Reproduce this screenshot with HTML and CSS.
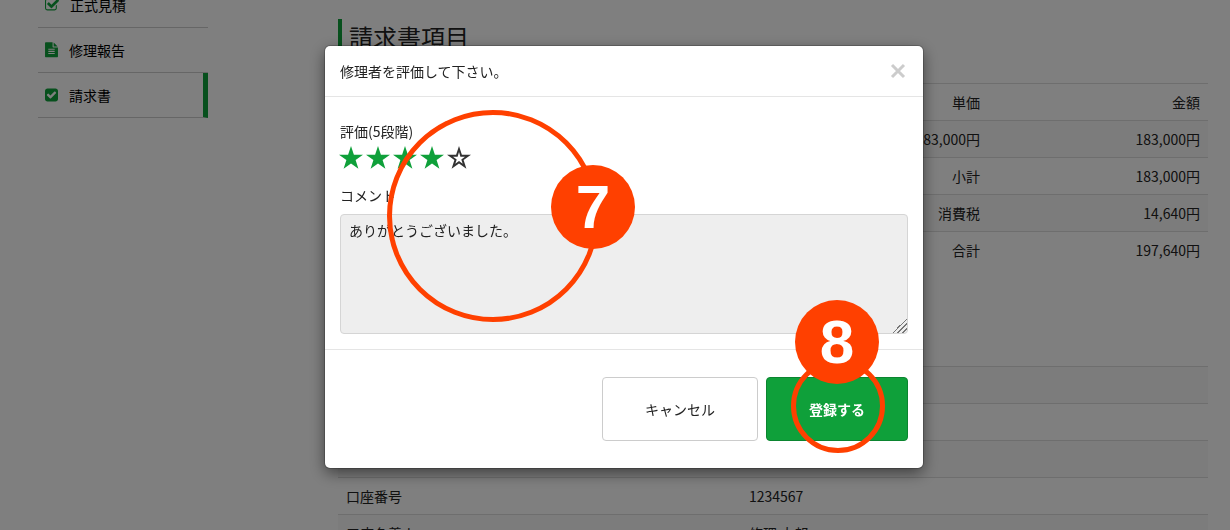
FILE: index.html
```
<!DOCTYPE html>
<html lang="ja">
<head>
    <meta charset="UTF-8">
    <meta name="viewport" content="width=device-width, initial-scale=1.0">
    <title>請求書</title>
    <link rel="stylesheet" href="styles.css">
</head>
<body>
    <div class="page">
        <nav class="sidebar">
            <a href="#" class="menu-item">
                <svg class="menu-icon wide" viewBox="0 128 1664 1536"><path d="M1408 930v318q0 119-84.500 203.500t-203.500 84.500h-832q-119 0-203.500-84.500t-84.500-203.500v-832q0-119 84.500-203.500t203.500-84.500h832q63 0 117 25 15 7 18 23 3 17-9 29l-49 49q-10 10-23 10-3 0-9-2-23-6-45-6h-832q-66 0-113 47t-47 113v832q0 66 47 113t113 47h832q66 0 113-47t47-113v-254q0-13 9-22l64-64q10-10 23-10 6 0 12 3 20 8 20 29zm231-489l-814 814q-24 24-57 24t-57-24l-430-430q-24-24-24-57t24-57l110-110q24-24 57-24t57 24l263 263 647-647q24-24 57-24t57 24l110 110q24 24 24 57t-24 57z"/></svg>
                <span>正式見積</span>
            </a>
            <a href="#" class="menu-item">
                <svg class="menu-icon" viewBox="0 0 1536 1664"><path d="M1468 380q14 14 28 36h-472v-472q22 14 36 28zM992 544h544v1056q0 40-28 68t-68 28h-1344q-40 0-68-28t-28-68v-1600q0-40 28-68t68-28h800v544q0 40 28 68t68 28zm160 736v-64q0-14-9-23t-23-9h-704q-14 0-23 9t-9 23v64q0 14 9 23t23 9h704q14 0 23-9t9-23zm0-256v-64q0-14-9-23t-23-9h-704q-14 0-23 9t-9 23v64q0 14 9 23t23 9h704q14 0 23-9t9-23zm0-256v-64q0-14-9-23t-23-9h-704q-14 0-23 9t-9 23v64q0 14 9 23t23 9h704q14 0 23-9t9-23z"/></svg>
                <span>修理報告</span>
            </a>
            <a href="#" class="menu-item active">
                <svg class="menu-icon" viewBox="0 0 1536 1536"><path d="M685 1171l614-614q19-19 19-45t-19-45l-102-102q-19-19-45-19t-45 19l-467 467-211-211q-19-19-45-19t-45 19l-102 102q-19 19-19 45t19 45l358 358q19 19 45 19t45-19zm851-883v960q0 119-84.500 203.500t-203.500 84.500h-960q-119 0-203.500-84.500t-84.500-203.500v-960q0-119 84.500-203.500t203.500-84.500h960q119 0 203.500 84.500t84.500 203.500z"/></svg>
                <span>請求書</span>
            </a>
        </nav>
        <main class="content">
            <h2>請求書項目</h2>
            <table class="table items">
                <thead>
                    <tr><th></th><th class="price">単価</th><th class="amount">金額</th></tr>
                </thead>
                <tbody>
                    <tr><td></td><td>183,000円</td><td>183,000円</td></tr>
                    <tr><td></td><td>小計</td><td>183,000円</td></tr>
                    <tr><td></td><td>消費税</td><td>14,640円</td></tr>
                    <tr><td></td><td>合計</td><td>197,640円</td></tr>
                </tbody>
            </table>
            <table class="table bank">
                <tbody>
                    <tr><th></th><td></td></tr>
                    <tr><th></th><td></td></tr>
                    <tr><th></th><td></td></tr>
                    <tr><th>口座番号</th><td>1234567</td></tr>
                    <tr><th>口座名義人</th><td>修理 太郎</td></tr>
                </tbody>
            </table>
        </main>
    </div>

    <div class="overlay">
        <form class="modal" role="dialog" aria-labelledby="modal-title">
            <div class="modal-header">
                <h4 id="modal-title">修理者を評価して下さい。</h4>
                <button type="button" class="close" aria-label="閉じる">
                    <svg viewBox="0 0 16 16"><path d="M2 2l12 12M14 2L2 14"/></svg>
                </button>
            </div>
            <div class="modal-body">
                <div class="label">評価(5段階)</div>
                <div class="stars">
                    <svg viewBox="0 0 24 23"><path d="M12 0l2.900 8.700H24l-7.400 5.400 2.800 8.700L12 17.400l-7.400 5.400 2.800-8.700L0 8.700h9.100z"/></svg>
                    <svg viewBox="0 0 24 23"><path d="M12 0l2.900 8.700H24l-7.400 5.400 2.800 8.700L12 17.400l-7.400 5.400 2.800-8.700L0 8.700h9.100z"/></svg>
                    <svg viewBox="0 0 24 23"><path d="M12 0l2.900 8.700H24l-7.400 5.400 2.800 8.700L12 17.400l-7.400 5.400 2.800-8.700L0 8.700h9.100z"/></svg>
                    <svg viewBox="0 0 24 23"><path d="M12 0l2.900 8.700H24l-7.400 5.400 2.800 8.700L12 17.400l-7.400 5.400 2.800-8.700L0 8.700h9.100z"/></svg>
                    <svg class="empty" viewBox="0 0 24 23"><path fill-rule="evenodd" d="M12 0l2.900 8.700H24l-7.400 5.400 2.800 8.700L12 17.400l-7.400 5.400 2.800-8.700L0 8.700h9.100zM12 6l-1.400 4.700H6l3.700 2.700-1.400 4.400 3.700-2.700 3.700 2.700-1.400-4.400 3.700-2.700h-4.600z"/></svg>
                </div>
                <label class="label" for="comment">コメント</label>
                <textarea id="comment">ありがとうございました。</textarea>
            </div>
            <div class="modal-footer">
                <button type="button" class="btn">キャンセル</button>
                <button type="submit" class="btn btn-success">登録する</button>
            </div>
            <!-- step markers -->
            <div class="ring ring-7"></div>
            <div class="badge badge-7">7</div>
            <div class="ring ring-8"></div>
            <div class="badge badge-8">8</div>
        </form>
    </div>
</body>
</html>
```

FILE: styles.css
```
* {
    box-sizing: border-box;
}
body {
    margin: 0;
    height: 100vh;
    overflow: hidden;
    font-family: "Noto Sans CJK JP", sans-serif;
    font-size: 14px;
    line-height: 20px;
    color: #222;
    background: #fff;
}
.page {
    display: flex;
    gap: 130px;
    margin-top: -17px;
    padding: 0 22px 0 38px;
}
.sidebar {
    flex: 0 0 170px;
}
.menu-item {
    display: flex;
    align-items: center;
    gap: 11px;
    height: 45px;
    padding-left: 7px;
    border-bottom: 1px solid #ccc;
    color: #000;
    text-decoration: none;
}
.menu-item.active {
    border-right: 5px solid #0fa03a;
}
.menu-icon {
    width: 13px;
    height: 14px;
    overflow: visible;
    fill: #0fa03a;
}
.menu-icon.wide {
    width: 14px;
}
.content {
    flex: 1;
    padding-top: 36px;
}
h2 {
    margin: 0 0 29px;
    padding-left: 7px;
    border-left: 4px solid #0fa03a;
    font-size: 24px;
    font-weight: normal;
    line-height: 35px;
}
.table {
    width: 100%;
    table-layout: fixed;
    border-collapse: separate;
    border-spacing: 0;
}
.table th,
.table td {
    height: 37px;
    padding: 8px;
    border-top: 1px solid #ddd;
    font-weight: normal;
    text-align: left;
}
.table tbody tr:nth-child(odd) {
    background: #f9f9f9;
}
.items {
    margin-bottom: 98px;
}
.items th,
.items td {
    text-align: right;
}
.price,
.amount {
    width: 220px;
}
.bank th {
    width: 403px;
}
.overlay {
    position: fixed;
    inset: 0;
    padding: 46px 0;
    background: rgba(0, 0, 0, 0.5);
}
.modal {
    position: relative;
    width: 598px;
    margin: 0 auto;
    left: 9px;
    background: #fff;
    border-radius: 5px;
    box-shadow: 0 5px 15px rgba(0, 0, 0, 0.5), 0 0 0 1px rgba(0, 0, 0, 0.2);
}
.modal-header {
    display: flex;
    justify-content: space-between;
    align-items: center;
    padding: 15px;
    border-bottom: 1px solid #e5e5e5;
}
.modal-header h4 {
    margin: 0;
    font-size: 14px;
    font-weight: normal;
}
.close {
    display: flex;
    padding: 0 2px;
    border: none;
    background: none;
    cursor: pointer;
}
.close svg {
    width: 16px;
    height: 16px;
    fill: none;
    stroke: #ccc;
    stroke-width: 3;
}
.modal-body {
    padding: 24px 15px 15px;
}
.label {
    display: block;
}
.stars {
    display: flex;
    gap: 3px;
    margin: 5px -1px 16px;
}
.stars svg {
    width: 24px;
    height: 23px;
    fill: #0fa03a;
}
.stars .empty {
    fill: #333;
}
textarea {
    display: block;
    width: 100%;
    height: 120px;
    margin-top: 9px;
    padding: 5px 8px;
    border: 1px solid #d5d5d5;
    border-radius: 4px;
    background: #eee;
    color: #222;
    font: inherit;
}
textarea::-webkit-resizer {
    background: linear-gradient(135deg, transparent 50%, #777 50%, #777 56%, transparent 56%, transparent 66%, #777 66%, #777 72%, transparent 72%, transparent 82%, #777 82%, #777 88%, transparent 88%);
}
.modal-footer {
    display: flex;
    justify-content: flex-end;
    gap: 8px;
    padding: 27px 15px;
    border-top: 1px solid #e5e5e5;
}
.btn {
    padding: 21px 42px;
    border: 1px solid #ccc;
    border-radius: 4px;
    background: #fff;
    color: #222;
    font: inherit;
    cursor: pointer;
}
.btn-success {
    border-color: #0b8530;
    background: #0fa03a;
    color: #fff;
    font-weight: bold;
}
.ring,
.badge {
    position: absolute;
    border-radius: 50%;
    pointer-events: none;
}
.ring {
    border: 5px solid #ff4000;
}
.ring-7 {
    left: 62px;
    top: 64px;
    width: 212px;
    height: 212px;
}
.ring-8 {
    left: 466px;
    top: 313px;
    width: 94px;
    height: 94px;
}
.badge {
    width: 84px;
    height: 84px;
    background: #ff4000;
    color: #fff;
    font-family: "Liberation Sans", Arial, sans-serif;
    font-size: 62px;
    font-weight: bold;
    line-height: 84px;
    text-align: center;
}
.badge-7 {
    left: 226px;
    top: 119px;
}
.badge-8 {
    left: 470px;
    top: 254px;
}
```
